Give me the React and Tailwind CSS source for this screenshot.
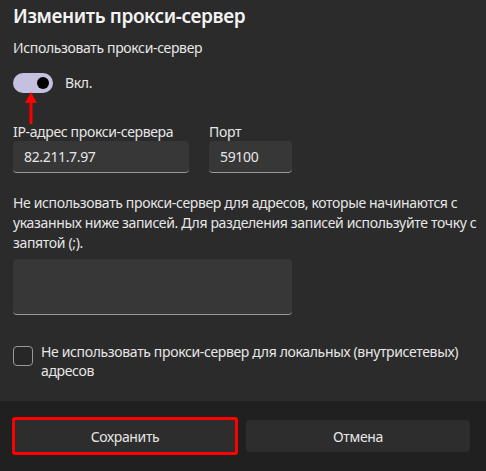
import React from "react";

function App() {
  return (
    <div
      className="w-[486px] h-[471px] flex flex-col bg-[#2b2b2b] text-white overflow-hidden text-[14px] tracking-[-0.35px]"
      style={{ fontFamily: '"Noto Sans", "Open Sans", sans-serif' }}
    >
      <div className="flex-1 px-[13px] relative">
        <h1 className="text-[19px] font-semibold leading-[28px] pt-[2px] tracking-[-0.4px] text-[#f3f3f3]">Изменить прокси-сервер</h1>
        <div className="mt-[8px] leading-[20px] text-[#e6e6e6]">Использовать прокси-сервер</div>

        <div className="mt-[14px] flex items-center gap-3">
          <div className="w-[40px] h-[20px] rounded-full bg-[#c6c0e0] flex items-center justify-end pr-[4px]">
            <div className="w-[12px] h-[12px] rounded-full bg-black" />
          </div>
          <span className="text-[#e6e6e6]">Вкл.</span>
        </div>

        {/* red annotation arrow */}
        <svg className="absolute left-[24px] top-[92px]" width="14" height="32" viewBox="0 0 14 32">
          <path d="M7 0 L13 11 L1 11 Z" fill="#ff0000" />
          <rect x="5.5" y="10" width="3" height="22" fill="#ff0000" />
        </svg>

        <div className="mt-[29px] flex gap-5">
          <div className="flex flex-col">
            <span className="leading-[19px] text-[#e6e6e6]">IP-адрес прокси-сервера</span>
            <div className="w-[176px] h-[32px] rounded-[4px] bg-[#373737] border-b border-[#9a9a9a] flex items-center px-[11px] text-[#e6e6e6]">
              82.211.7.97
            </div>
          </div>
          <div className="flex flex-col">
            <span className="leading-[19px] text-[#e6e6e6]">Порт</span>
            <div className="w-[83px] h-[32px] rounded-[4px] bg-[#373737] border-b border-[#9a9a9a] flex items-center px-[11px] text-[#e6e6e6]">
              59100
            </div>
          </div>
        </div>

        <p className="mt-[20px] leading-[20px] text-[#e6e6e6] whitespace-nowrap">
          Не использовать прокси-сервер для адресов, которые начинаются с
          <br />
          указанных ниже записей. Для разделения записей используйте точку с
          <br />
          запятой (;).
        </p>

        <div className="mt-[6px] w-[279px] h-[56px] rounded-[4px] bg-[#373737] border-b border-[#9a9a9a]" />

        <div className="mt-[27px] flex gap-[8px]">
          <div className="w-[20px] h-[20px] rounded-[4px] border border-[#9a9a9a] bg-[#272727] shrink-0 mt-[4px]" />
          <span className="leading-[19px] text-[#e6e6e6] whitespace-nowrap">
            Не использовать прокси-сервер для локальных (внутрисетевых)
            <br />
            адресов
          </span>
        </div>
      </div>

      <div className="h-[70px] bg-[#202020] flex items-center gap-[8px] px-[12px]">
        <button className="w-[226px] h-[38px] rounded-[3px] bg-[#2d2d2d] border-[3px] border-[#ff0000] text-[#e6e6e6]">
          Сохранить
        </button>
        <button className="w-[224px] h-[32px] rounded-[4px] bg-[#2d2d2d] text-[#e6e6e6]">
          Отмена
        </button>
      </div>
    </div>
  );
}

export default App;
